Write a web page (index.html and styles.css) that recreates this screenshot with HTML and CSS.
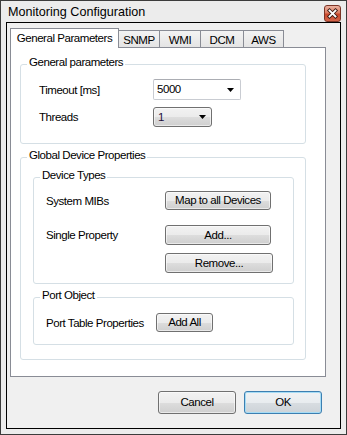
FILE: index.html
```html
<!DOCTYPE html>
<html>
<head>
<meta charset="utf-8">
<link rel="stylesheet" href="styles.css">
</head>
<body>
<div class="window">
  <div class="titlebar">
    <span class="title">Monitoring Configuration</span>
    <span class="close">
      <svg width="15" height="15" viewBox="0 0 15 15">
        <path d="M4.5 4.5 L10.5 10.5 M10.5 4.5 L4.5 10.5" stroke="#3b1a12" stroke-width="3.6" stroke-linecap="square" fill="none"/>
        <path d="M4.5 4.5 L10.5 10.5 M10.5 4.5 L4.5 10.5" stroke="#ffffff" stroke-width="1.8" stroke-linecap="square" fill="none"/>
      </svg>
    </span>
  </div>
  <div class="client">
    <div class="tabs">
      <div class="tab active">General Parameters</div>
      <div class="tab t-snmp">SNMP</div>
      <div class="tab t-wmi">WMI</div>
      <div class="tab t-dcm">DCM</div>
      <div class="tab t-aws">AWS</div>
    </div>
    <div class="panel">
      <fieldset class="group g1">
        <legend>General parameters</legend>
        <div class="g1-body">
          <div class="row r-timeout">
            <span class="label l-g1">Timeout [ms]</span>
            <div class="combo edit"><span class="ctext">5000</span><svg class="arrow" width="7" height="4" viewBox="0 0 7 4"><polygon points="0,0 7,0 3.5,4" fill="#000"/></svg></div>
          </div>
          <div class="row r-threads">
            <span class="label l-g1">Threads</span>
            <div class="combo drop"><span class="ctext c1">1</span><svg class="arrow" width="7" height="4" viewBox="0 0 7 4"><polygon points="0,0 7,0 3.5,4" fill="#000"/></svg></div>
          </div>
        </div>
      </fieldset>
      <fieldset class="group g2">
        <legend>Global Device Properties</legend>
        <fieldset class="group sub devtypes">
          <legend>Device Types</legend>
          <div class="sub-body">
            <div class="row r-map"><span class="label l-dev">System MIBs</span><button class="btn b-map">Map to all Devices</button></div>
            <div class="row r-add"><span class="label l-dev">Single Property</span><button class="btn b-add">Add...</button></div>
            <div class="row r-remove"><span class="label l-dev"></span><button class="btn b-remove">Remove...</button></div>
          </div>
        </fieldset>
        <fieldset class="group sub port">
          <legend>Port Object</legend>
          <div class="sub-body port-body">
            <div class="row r-port"><span class="label l-port">Port Table Properties</span><button class="btn b-addall">Add All</button></div>
          </div>
        </fieldset>
      </fieldset>
    </div>
    <div class="footer">
      <button class="btn dlg">Cancel</button>
      <button class="btn dlg ok">OK</button>
    </div>
  </div>
</div>
</body>
</html>
```

FILE: styles.css
```css
* { box-sizing: border-box; }
html, body { margin: 0; padding: 0; background: #ffffff; }
body {
  font-family: "Liberation Sans", Arial, sans-serif;
  font-size: 11.5px;
  letter-spacing: -0.45px;
  color: #000;
}
.window {
  width: 347px;
  height: 435px;
  border: 1px solid #3c3c3c;
  background: #ececec;
  padding: 0 5px 5px 5px;
  display: flex;
  flex-direction: column;
}
.titlebar {
  height: 21px;
  display: flex;
  align-items: flex-start;
  justify-content: space-between;
  flex: none;
}
.title {
  font-size: 12.6px;
  letter-spacing: 0;
  line-height: 19px;
  padding-top: 2px;
  padding-left: 2px;
  color: #000;
}
.close {
  width: 17px;
  height: 17px;
  margin-top: 4px;
  border: 1px solid #7c3426;
  border-radius: 3px;
  background: linear-gradient(#eab1a0 0%, #dc7d63 45%, #c9472b 55%, #d3654a 100%);
  display: flex;
  align-items: center;
  justify-content: center;
}
.close svg { display: block; }
.client {
  flex: 1;
  border: 1px solid #000;
  background: #f0f0f0;
  padding: 5px 0 14px 3px;
  display: flex;
  flex-direction: column;
}
.tabs {
  display: flex;
  align-items: flex-start;
  height: 20px;
  flex: none;
}
.tab {
  border: 1px solid #898c95;
  border-bottom: none;
  text-align: center;
  line-height: 13px;
  white-space: nowrap;
}
.tab.active {
  width: 109px;
  height: 20px;
  padding-top: 3px;
  background: #fff;
  position: relative;
  z-index: 1;
}
.tab:not(.active) {
  height: 17px;
  margin-top: 2px;
  margin-left: -1px;
  padding-top: 3px;
  background: linear-gradient(#f3f3f3, #e4e4e4);
}
.t-snmp { width: 42px; }
.t-wmi { width: 42px; }
.t-dcm { width: 44px; }
.t-aws { width: 41px; }
.panel {
  margin-top: -1px;
  margin-right: 14px;
  border: 1px solid #898c95;
  background: #fff;
  padding: 8px 19px 16px 9px;
  flex: none;
}
fieldset.group {
  margin: 0;
  border: 1px solid #d5dfe5;
  border-radius: 3px;
  padding: 0 0 16px 6px;
  min-width: 0;
}
fieldset.group > legend {
  padding: 0 2px 4px 2px;
  line-height: 13px;
}
.g1-body {
  padding: 6px 0 0 12px;
  display: flex;
  flex-direction: column;
  gap: 7px;
}
.row {
  display: flex;
  align-items: center;
}
.r-timeout { height: 21px; }
.r-threads { height: 20px; }
.label { flex: none; white-space: nowrap; }
.l-g1 { width: 114px; }
.l-dev { width: 119px; }
.l-port { width: 110px; }
.combo {
  display: flex;
  align-items: center;
  justify-content: space-between;
}
.combo.edit {
  width: 88px;
  height: 21px;
  background: #fff;
  border: 1px solid #c9ccd2;
  border-top-color: #abadb3;
  border-radius: 2px;
  padding: 0 6px 0 3px;
}
.combo.drop {
  width: 59px;
  height: 20px;
  border: 1px solid #707070;
  border-radius: 3px;
  background: linear-gradient(#f2f2f2 0%, #ebebeb 50%, #dddddd 51%, #cfcfcf 100%);
  box-shadow: inset 0 0 0 1px rgba(255,255,255,0.55);
  padding: 0 5px 0 4px;
}
.ctext { line-height: 13px; }
.c1 { color: #1e0f3c; }
.arrow { display: block; flex: none; }
.g2 {
  margin-top: 5px !important;
  padding: 0 11px 14px 6px !important;
}
.devtypes {
  margin-top: 3px !important;
  margin-left: 6px !important;
  padding-bottom: 10px !important;
}
.port {
  margin-top: 5px !important;
  margin-left: 6px !important;
  padding-bottom: 12px !important;
}
.sub-body {
  padding: 5px 0 0 6px;
  display: flex;
  flex-direction: column;
}
.port-body { padding-top: 7px; }
.r-map { height: 19px; margin-bottom: 15px; }
.r-add { height: 20px; margin-bottom: 8px; }
.r-remove { height: 20px; }
.r-port { height: 19px; }
.btn {
  font-family: "Liberation Sans", Arial, sans-serif;
  font-size: 11.5px;
  letter-spacing: -0.45px;
  color: #000;
  margin: 0;
  padding: 0;
  border: 1px solid #707070;
  border-radius: 3px;
  background: linear-gradient(#f2f2f2 0%, #ebebeb 50%, #dddddd 51%, #cfcfcf 100%);
  box-shadow: inset 0 0 0 1px rgba(255,255,255,0.55);
  display: flex;
  align-items: center;
  justify-content: center;
  line-height: 13px;
  flex: none;
}
.b-map { width: 106px; height: 19px; }
.b-add { width: 106px; height: 20px; }
.b-remove { width: 108px; height: 20px; }
.b-addall { width: 57px; height: 19px; }
.footer {
  margin-top: 14px;
  padding-right: 18px;
  display: flex;
  justify-content: flex-end;
  gap: 8px;
}
.btn.dlg { width: 78px; height: 23px; }
.btn.ok {
  border-color: #3c7fb1;
  box-shadow: inset 0 0 0 1px #a6dcf5;
  background: linear-gradient(#f0f2f4 0%, #e8ecef 50%, #d8dde1 51%, #cdd3d8 100%);
}
```
